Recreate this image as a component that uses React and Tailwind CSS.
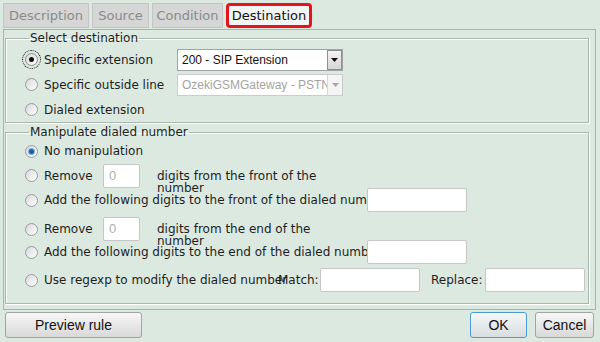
import React from 'react';

// radio drawn by hand so it looks the same in every browser
function Radio({ checked, blue, focus }) {
  return (
    <span
      className={
        focus
          ? 'flex shrink-0 items-center justify-center w-[13px] h-[13px] rounded-full border border-[#8a8c8e] bg-linear-to-br from-[#d6d8da] to-[#ffffff] outline-1 outline-dotted outline-black outline-offset-2'
          : 'flex shrink-0 items-center justify-center w-[13px] h-[13px] rounded-full border border-[#9a9c9e] bg-linear-to-br from-[#d6d8da] to-[#ffffff]'
      }
    >
      {checked && (
        <span
          className={
            blue
              ? 'w-[5px] h-[5px] rounded-full bg-[#1f5fa6] shadow-[0_0_0_1px_#7fb0dd]'
              : 'w-[5px] h-[5px] rounded-full bg-[#111]'
          }
        />
      )}
    </span>
  );
}

function Select({ text, disabled }) {
  return (
    <div
      className={
        disabled
          ? "flex h-[22px] w-[166px] items-stretch border border-[#c9cbcd] bg-white font-['Liberation_Sans'] text-[12px] text-[#a3a3a3]"
          : "flex h-[22px] w-[166px] items-stretch border border-[#9fa2a6] bg-white font-['Liberation_Sans'] text-[12px] text-[#111]"
      }
    >
      <span className="flex-1 overflow-hidden whitespace-nowrap pl-[4px] leading-[20px]">{text}</span>
      <span
        className={
          disabled
            ? 'flex w-[15px] shrink-0 items-center justify-center border-l border-[#d4d6d8] bg-[#f4f4f4]'
            : 'flex w-[15px] shrink-0 items-center justify-center border border-[#8c8f93] bg-linear-to-b from-[#f4f4f4] to-[#d6d6d6]'
        }
      >
        <svg width="7" height="4" viewBox="0 0 7 4">
          <path d="M0 0h7L3.5 4z" fill={disabled ? '#a8a8a8' : '#111'} />
        </svg>
      </span>
    </div>
  );
}

function TextBox({ w, value }) {
  return (
    <div
      className="relative flex h-[24px] shrink-0 items-center rounded-[2px] border border-[#c4c6c8] bg-white pl-[5px] font-['Liberation_Sans'] text-[13px] text-[#b0b0b0]"
      style={{ width: w }}
    >
      {value}
    </div>
  );
}

function Tab({ label, w, active }) {
  if (active) {
    return (
      <div
        className="flex h-[25px] items-center justify-center rounded-[4px] border-[3px] border-[#e5131b] bg-[#f3f5f4] text-[13px] text-[#111]"
        style={{ width: w }}
      >
        {label}
      </div>
    );
  }
  return (
    <div
      className="flex h-[25px] items-center justify-center border border-[#c3c5c4] bg-[#d5d6d5] text-[13px] text-[#8a8a8a]"
      style={{ width: w }}
    >
      {label}
    </div>
  );
}

const groove = 'border border-[#aab6ae] shadow-[inset_1px_1px_0_#fff,1px_1px_0_#fff]';

export default function App() {
  return (
    <div className="h-[342px] w-[600px] overflow-hidden bg-[#dce9e0] font-['DejaVu_Sans',sans-serif] text-[12px] text-[#1e1e1e]">
      {/* tabs */}
      <div className="flex h-[29px] gap-[3px] pl-[3px] pt-[3px]">
        <Tab label="Description" w={86} />
        <Tab label="Source" w={57} />
        <Tab label="Condition" w={71} />
        <Tab label="Destination" w={86} active />
      </div>

      {/* panel */}
      <div className="ml-[3px] h-[281px] w-[593px] border border-[#aab3ad] pl-[1px] pr-[6px] pt-[1px]">
        <fieldset className={`${groove} pl-[19px] pt-[2px]`}>
          <legend className="ml-[4px] px-[1px] leading-[14px]">Select destination</legend>
          <div className="flex h-[25px] items-center">
            <Radio checked focus />
            <span className="ml-[6px] w-[133px]">Specific extension</span>
            <Select text="200 - SIP Extension" />
          </div>
          <div className="flex h-[25px] items-center">
            <Radio />
            <span className="ml-[6px] w-[133px]">Specific outside line</span>
            <Select text="OzekiGSMGateway - PSTN" disabled />
          </div>
          <div className="flex h-[25px] items-center">
            <Radio />
            <span className="ml-[6px]">Dialed extension</span>
          </div>
        </fieldset>

        <fieldset className={`${groove} mt-[2px] pb-[11px] pl-[19px]`}>
          <legend className="ml-[4px] px-[1px] leading-[14px]">Manipulate dialed number</legend>
          <div className="flex h-[24px] items-center">
            <Radio checked blue />
            <span className="ml-[6px]">No manipulation</span>
          </div>
          <div className="flex h-[25px] items-center">
            <Radio />
            <span className="ml-[6px] w-[59px]">Remove</span>
            <TextBox w={37} value="0" />
            <div className="ml-[17px] h-[12px] w-[180px] leading-[12px]">digits from the front of the number</div>
          </div>
          <div className="flex h-[24px] items-center">
            <Radio />
            <span className="ml-[6px] w-[323px] shrink-0 whitespace-nowrap">
              Add the following digits to the front of the dialed number
            </span>
            <TextBox w={100} />
          </div>
          <div className="mt-[5px] flex h-[24px] items-center">
            <Radio />
            <span className="ml-[6px] w-[59px]">Remove</span>
            <TextBox w={37} value="0" />
            <div className="ml-[17px] h-[12px] w-[180px] leading-[12px]">digits from the end of the number</div>
          </div>
          <div className="flex h-[22px] items-center">
            <Radio />
            <span className="ml-[6px] w-[323px] shrink-0 whitespace-nowrap">
              Add the following digits to the end of the dialed number
            </span>
            <TextBox w={100} />
          </div>
          <div className="mt-[5px] flex h-[24px] items-center">
            <Radio />
            <span className="ml-[6px] w-[234px] shrink-0 whitespace-nowrap">Use regexp to modify the dialed number</span>
            <span className="w-[42px] shrink-0">Match:</span>
            <TextBox w={100} />
            <span className="ml-[11px] w-[54px] shrink-0">Replace:</span>
            <TextBox w={100} />
          </div>
        </fieldset>
      </div>

      {/* buttons */}
      <div className="mt-[2px] flex items-center pl-[5px] pr-[6px] font-['Liberation_Sans',sans-serif] text-[14px] text-[#111]">
        <button className="h-[26px] w-[137px] rounded-[3px] border border-[#a3a3a3] bg-linear-to-b from-[#f7f7f7] to-[#d9d9d9]">
          Preview rule
        </button>
        <button className="ml-auto h-[26px] w-[57px] rounded-[3px] border border-[#4a9ad6] bg-linear-to-b from-[#f5f8fa] to-[#d8dde0]">
          OK
        </button>
        <button className="ml-[8px] h-[26px] w-[59px] rounded-[3px] border border-[#a3a3a3] bg-linear-to-b from-[#f7f7f7] to-[#d9d9d9]">
          Cancel
        </button>
      </div>
    </div>
  );
}
